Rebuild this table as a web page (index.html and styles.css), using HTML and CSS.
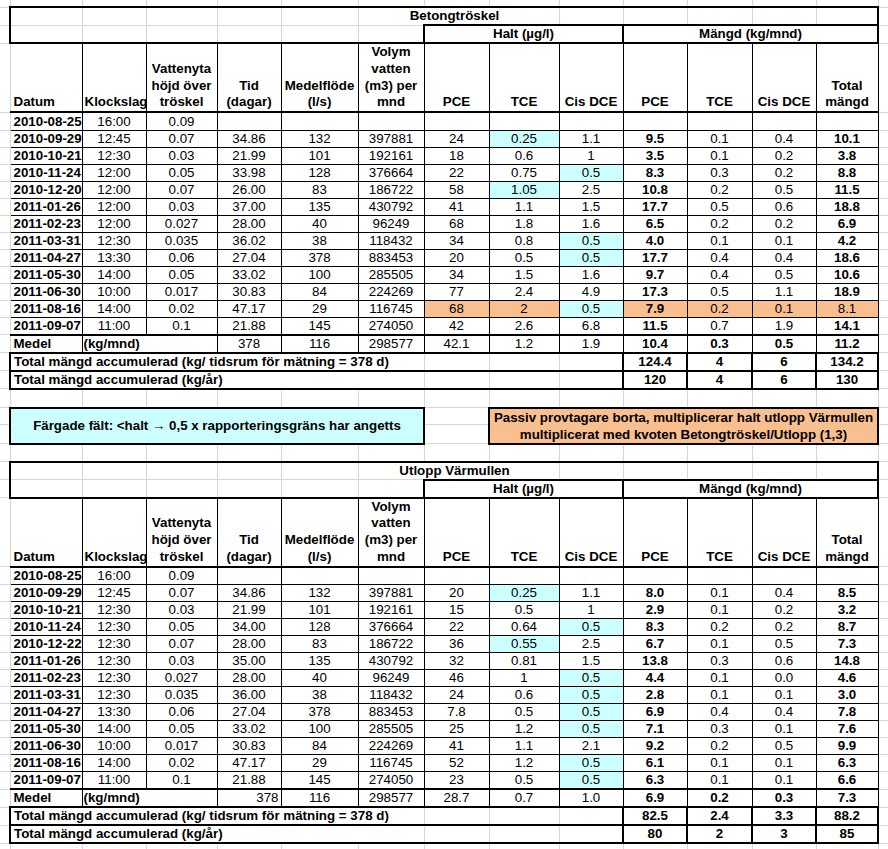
FILE: index.html
```html
<!DOCTYPE html>
<html lang="sv">
<head>
<meta charset="utf-8">
<title>Betongtröskel / Utlopp Värmullen</title>
<link rel="stylesheet" href="styles.css">
</head>
<body>
<table class="sheet">
<colgroup><col><col><col><col><col><col><col><col><col><col><col><col><col><col><col></colgroup>
<tbody>
<tr class="r0"><td></td><td></td><td></td><td></td><td></td><td></td><td></td><td></td><td></td><td></td><td></td><td></td><td></td><td></td><td></td></tr>

<tr class="ti"><td></td><td class="Tk Lk"></td><td class="Tk"></td><td class="Tk"></td><td class="Tk"></td><td class="Tk"></td><td colspan="3" class="Tk ttl">Betongtröskel</td><td class="Tk"></td><td class="Tk"></td><td class="Tk"></td><td class="Tk"></td><td class="Tk Rk"></td><td></td></tr>
<tr class="ha"><td></td><td class="Lk"></td><td></td><td></td><td></td><td></td><td></td><td colspan="3" class="box">Halt (µg/l)</td><td colspan="4" class="box">Mängd (kg/mnd)</td><td></td></tr>
<tr class="h"><td></td><td class="l">Datum</td><td>Klockslag</td><td>Vattenyta<br>höjd över<br>tröskel</td><td>Tid<br>(dagar)</td><td>Medelflöde<br>(l/s)</td><td>Volym<br>vatten<br>(m3) per<br>mnd</td><td>PCE</td><td>TCE</td><td>Cis DCE</td><td>PCE</td><td>TCE</td><td>Cis DCE</td><td>Total<br>mängd</td><td></td></tr>
<tr class="d first"><td></td><td>2010-08-25</td><td>16:00</td><td>0.09</td><td></td><td></td><td></td><td></td><td></td><td></td><td></td><td></td><td></td><td></td><td></td></tr>
<tr class="d"><td></td><td>2010-09-29</td><td>12:45</td><td>0.07</td><td>34.86</td><td>132</td><td>397881</td><td>24</td><td class="cy">0.25</td><td>1.1</td><td>9.5</td><td>0.1</td><td>0.4</td><td>10.1</td><td></td></tr>
<tr class="d"><td></td><td>2010-10-21</td><td>12:30</td><td>0.03</td><td>21.99</td><td>101</td><td>192161</td><td>18</td><td>0.6</td><td>1</td><td>3.5</td><td>0.1</td><td>0.2</td><td>3.8</td><td></td></tr>
<tr class="d"><td></td><td>2010-11-24</td><td>12:00</td><td>0.05</td><td>33.98</td><td>128</td><td>376664</td><td>22</td><td>0.75</td><td class="cy">0.5</td><td>8.3</td><td>0.3</td><td>0.2</td><td>8.8</td><td></td></tr>
<tr class="d"><td></td><td>2010-12-20</td><td>12:00</td><td>0.07</td><td>26.00</td><td>83</td><td>186722</td><td>58</td><td class="cy">1.05</td><td>2.5</td><td>10.8</td><td>0.2</td><td>0.5</td><td>11.5</td><td></td></tr>
<tr class="d"><td></td><td>2011-01-26</td><td>12:00</td><td>0.03</td><td>37.00</td><td>135</td><td>430792</td><td>41</td><td>1.1</td><td>1.5</td><td>17.7</td><td>0.5</td><td>0.6</td><td>18.8</td><td></td></tr>
<tr class="d"><td></td><td>2011-02-23</td><td>12:00</td><td>0.027</td><td>28.00</td><td>40</td><td>96249</td><td>68</td><td>1.8</td><td>1.6</td><td>6.5</td><td>0.2</td><td>0.2</td><td>6.9</td><td></td></tr>
<tr class="d"><td></td><td>2011-03-31</td><td>12:30</td><td>0.035</td><td>36.02</td><td>38</td><td>118432</td><td>34</td><td>0.8</td><td class="cy">0.5</td><td>4.0</td><td>0.1</td><td>0.1</td><td>4.2</td><td></td></tr>
<tr class="d"><td></td><td>2011-04-27</td><td>13:30</td><td>0.06</td><td>27.04</td><td>378</td><td>883453</td><td>20</td><td>0.5</td><td class="cy">0.5</td><td>17.7</td><td>0.4</td><td>0.4</td><td>18.6</td><td></td></tr>
<tr class="d"><td></td><td>2011-05-30</td><td>14:00</td><td>0.05</td><td>33.02</td><td>100</td><td>285505</td><td>34</td><td>1.5</td><td>1.6</td><td>9.7</td><td>0.4</td><td>0.5</td><td>10.6</td><td></td></tr>
<tr class="d"><td></td><td>2011-06-30</td><td>10:00</td><td>0.017</td><td>30.83</td><td>84</td><td>224269</td><td>77</td><td>2.4</td><td>4.9</td><td>17.3</td><td>0.5</td><td>1.1</td><td>18.9</td><td></td></tr>
<tr class="d"><td></td><td>2011-08-16</td><td>14:00</td><td>0.02</td><td>47.17</td><td>29</td><td>116745</td><td class="or">68</td><td class="or">2</td><td class="cy">0.5</td><td class="or">7.9</td><td class="or">0.2</td><td class="or">0.1</td><td class="or nb">8.1</td><td></td></tr>
<tr class="d"><td></td><td>2011-09-07</td><td>11:00</td><td>0.1</td><td>21.88</td><td>145</td><td>274050</td><td>42</td><td>2.6</td><td>6.8</td><td>11.5</td><td>0.7</td><td>1.9</td><td>14.1</td><td></td></tr>
<tr class="m"><td></td><td class="Lk nr l b">Medel</td><td colspan="2" class="nl nr l b pk">(kg/mnd)</td><td class="nl Rk">378</td><td class="Lk Rk">116</td><td class="Rk">298577</td><td class="Lk">42.1</td><td>1.2</td><td>1.9</td><td class="Lk b">10.4</td><td class="b">0.3</td><td class="b">0.5</td><td class="Rk b">11.2</td><td></td></tr>
<tr class="t"><td></td><td colspan="6" class="tx">Total mängd accumulerad (kg/ tidsrum för mätning = 378 d)</td><td class="gt"></td><td class="gt"></td><td class="gt"></td><td class="v">124.4</td><td class="v">4</td><td class="v">6</td><td class="v">134.2</td><td></td></tr>
<tr class="t t2"><td></td><td colspan="6" class="tx">Total mängd accumulerad (kg/år)</td><td class="gt"></td><td class="gt"></td><td class="gt"></td><td class="v">120</td><td class="v">4</td><td class="v">6</td><td class="v">130</td><td></td></tr>

<tr class="gap1"><td></td><td></td><td></td><td></td><td></td><td></td><td></td><td></td><td></td><td></td><td></td><td></td><td></td><td></td><td></td></tr>
<tr class="lg1"><td></td><td colspan="6" rowspan="2" class="note cyan">Färgade fält: &lt;halt → 0,5 x rapporteringsgräns har angetts</td><td></td><td colspan="6" rowspan="2" class="note orange">Passiv provtagare borta, multiplicerar halt utlopp Värmullen<br>multiplicerat med kvoten Betongtröskel/Utlopp (1,3)</td><td></td></tr>
<tr class="lg2"><td></td><td></td><td></td></tr>
<tr class="gap2"><td></td><td></td><td></td><td></td><td></td><td></td><td></td><td></td><td></td><td></td><td></td><td></td><td></td><td></td><td></td></tr>

<tr class="ti"><td></td><td class="Tk Lk"></td><td class="Tk"></td><td class="Tk"></td><td class="Tk"></td><td class="Tk"></td><td colspan="3" class="Tk ttl">Utlopp Värmullen</td><td class="Tk"></td><td class="Tk"></td><td class="Tk"></td><td class="Tk"></td><td class="Tk Rk"></td><td></td></tr>
<tr class="ha"><td></td><td class="Lk"></td><td></td><td></td><td></td><td></td><td></td><td colspan="3" class="box">Halt (µg/l)</td><td colspan="4" class="box">Mängd (kg/mnd)</td><td></td></tr>
<tr class="h"><td></td><td class="l">Datum</td><td>Klockslag</td><td>Vattenyta<br>höjd över<br>tröskel</td><td>Tid<br>(dagar)</td><td>Medelflöde<br>(l/s)</td><td>Volym<br>vatten<br>(m3) per<br>mnd</td><td>PCE</td><td>TCE</td><td>Cis DCE</td><td>PCE</td><td>TCE</td><td>Cis DCE</td><td>Total<br>mängd</td><td></td></tr>
<tr class="d first"><td></td><td>2010-08-25</td><td>16:00</td><td>0.09</td><td></td><td></td><td></td><td></td><td></td><td></td><td></td><td></td><td></td><td></td><td></td></tr>
<tr class="d"><td></td><td>2010-09-29</td><td>12:45</td><td>0.07</td><td>34.86</td><td>132</td><td>397881</td><td>20</td><td class="cy">0.25</td><td>1.1</td><td>8.0</td><td>0.1</td><td>0.4</td><td>8.5</td><td></td></tr>
<tr class="d"><td></td><td>2010-10-21</td><td>12:30</td><td>0.03</td><td>21.99</td><td>101</td><td>192161</td><td>15</td><td>0.5</td><td>1</td><td>2.9</td><td>0.1</td><td>0.2</td><td>3.2</td><td></td></tr>
<tr class="d"><td></td><td>2010-11-24</td><td>12:30</td><td>0.05</td><td>34.00</td><td>128</td><td>376664</td><td>22</td><td>0.64</td><td class="cy">0.5</td><td>8.3</td><td>0.2</td><td>0.2</td><td>8.7</td><td></td></tr>
<tr class="d"><td></td><td>2010-12-22</td><td>12:30</td><td>0.07</td><td>28.00</td><td>83</td><td>186722</td><td>36</td><td class="cy">0.55</td><td>2.5</td><td>6.7</td><td>0.1</td><td>0.5</td><td>7.3</td><td></td></tr>
<tr class="d"><td></td><td>2011-01-26</td><td>12:30</td><td>0.03</td><td>35.00</td><td>135</td><td>430792</td><td>32</td><td>0.81</td><td>1.5</td><td>13.8</td><td>0.3</td><td>0.6</td><td>14.8</td><td></td></tr>
<tr class="d"><td></td><td>2011-02-23</td><td>12:30</td><td>0.027</td><td>28.00</td><td>40</td><td>96249</td><td>46</td><td>1</td><td class="cy">0.5</td><td>4.4</td><td>0.1</td><td>0.0</td><td>4.6</td><td></td></tr>
<tr class="d"><td></td><td>2011-03-31</td><td>12:30</td><td>0.035</td><td>36.00</td><td>38</td><td>118432</td><td>24</td><td>0.6</td><td class="cy">0.5</td><td>2.8</td><td>0.1</td><td>0.1</td><td>3.0</td><td></td></tr>
<tr class="d"><td></td><td>2011-04-27</td><td>13:30</td><td>0.06</td><td>27.04</td><td>378</td><td>883453</td><td>7.8</td><td>0.5</td><td class="cy">0.5</td><td>6.9</td><td>0.4</td><td>0.4</td><td>7.8</td><td></td></tr>
<tr class="d"><td></td><td>2011-05-30</td><td>14:00</td><td>0.05</td><td>33.02</td><td>100</td><td>285505</td><td>25</td><td>1.2</td><td class="cy">0.5</td><td>7.1</td><td>0.3</td><td>0.1</td><td>7.6</td><td></td></tr>
<tr class="d"><td></td><td>2011-06-30</td><td>10:00</td><td>0.017</td><td>30.83</td><td>84</td><td>224269</td><td>41</td><td>1.1</td><td>2.1</td><td>9.2</td><td>0.2</td><td>0.5</td><td>9.9</td><td></td></tr>
<tr class="d"><td></td><td>2011-08-16</td><td>14:00</td><td>0.02</td><td>47.17</td><td>29</td><td>116745</td><td>52</td><td>1.2</td><td class="cy">0.5</td><td>6.1</td><td>0.1</td><td>0.1</td><td>6.3</td><td></td></tr>
<tr class="d"><td></td><td>2011-09-07</td><td>11:00</td><td>0.1</td><td>21.88</td><td>145</td><td>274050</td><td>23</td><td>0.5</td><td class="cy">0.5</td><td>6.3</td><td>0.1</td><td>0.1</td><td>6.6</td><td></td></tr>
<tr class="m"><td></td><td class="Lk nr l b">Medel</td><td colspan="2" class="nl nr l b pk">(kg/mnd)</td><td class="nl Rk r">378</td><td class="Lk Rk">116</td><td class="Rk">298577</td><td class="Lk">28.7</td><td>0.7</td><td>1.0</td><td class="Lk b">6.9</td><td class="b">0.2</td><td class="b">0.3</td><td class="Rk b">7.3</td><td></td></tr>
<tr class="t"><td></td><td colspan="6" class="tx">Total mängd accumulerad (kg/ tidsrum för mätning = 378 d)</td><td class="gt"></td><td class="gt"></td><td class="gt"></td><td class="v">82.5</td><td class="v">2.4</td><td class="v">3.3</td><td class="v">88.2</td><td></td></tr>
<tr class="t t2"><td></td><td colspan="6" class="tx">Total mängd accumulerad (kg/år)</td><td class="gt"></td><td class="gt"></td><td class="gt"></td><td class="v">80</td><td class="v">2</td><td class="v">3</td><td class="v">85</td><td></td></tr>
<tr class="end"><td></td><td></td><td></td><td></td><td></td><td></td><td></td><td></td><td></td><td></td><td></td><td></td><td></td><td></td><td></td></tr>
</tbody>
</table>
</body>
</html>
```

FILE: styles.css
```css
html, body {
  margin: 0;
  padding: 0;
  background: #ffffff;
  overflow: hidden;
}

.sheet {
  width: 888px;
  table-layout: fixed;
  border-collapse: collapse;
  font-family: "Liberation Sans", Arial, sans-serif;
  font-size: 10pt;
  color: #000;
}

.sheet col:nth-child(1) { width: 10px; }
.sheet col:nth-child(2) { width: 72px; }
.sheet col:nth-child(3) { width: 64px; }
.sheet col:nth-child(4) { width: 71px; }
.sheet col:nth-child(5) { width: 64px; }
.sheet col:nth-child(6) { width: 77px; }
.sheet col:nth-child(7) { width: 66px; }
.sheet col:nth-child(8) { width: 65px; }
.sheet col:nth-child(9) { width: 70px; }
.sheet col:nth-child(10) { width: 64px; }
.sheet col:nth-child(11) { width: 64px; }
.sheet col:nth-child(12) { width: 65px; }
.sheet col:nth-child(13) { width: 64px; }
.sheet col:nth-child(14) { width: 62px; }
.sheet col:nth-child(15) { width: 10px; }

.sheet td {
  border: 1px solid #d6d6d6;
  padding: 0 2px 1px;
  line-height: 15px;
  text-align: center;
  vertical-align: bottom;
  white-space: nowrap;
  overflow: visible;
}

.sheet tr td:first-child { border-left: none; }
.sheet tr td:last-child { border-right: none; }

/* row heights */
.r0 { height: 7px; }
.sheet .r0 td { border-top: none; }
.ti { height: 18px; }
.ha { height: 18px; }
.h { height: 69px; }
.d { height: 17px; }
.d.first { height: 18px; }
.m { height: 18px; }
.t { height: 17px; }
.t.t2 { height: 18px; }
.gap1 { height: 19px; }
.lg1 { height: 17px; }
.lg2 { height: 18px; }
.gap2 { height: 18px; }
.end { height: 9px; }
.sheet .end td { border-bottom: none; }

/* generic helpers */
.sheet td.Tk { border-top: 2px solid #000; }
.sheet td.Lk { border-left: 2px solid #000; }
.sheet td.Rk { border-right: 2px solid #000; }
.sheet td.nl { border-left: none; }
.sheet td.nr { border-right: none; }
.sheet td.l { text-align: left; padding-left: 3px; }
.sheet td.r { text-align: right; }
.sheet td.b { font-weight: bold; }
.sheet td.nb { font-weight: normal; }
.sheet td.pk { padding-left: 1px; }

/* title row */
.sheet td.ttl {
  font-weight: bold;
  padding-right: 10px;
}

/* Halt / Mängd group headers */
.sheet td.box {
  border: 2px solid #000;
  font-weight: bold;
}

/* column header row */
.sheet .h td {
  font-weight: bold;
  line-height: 16.7px;
  padding-bottom: 0;
}
.sheet .h td:nth-child(n+2):nth-last-child(n+2) {
  border: 1px solid #000;
  border-top: 2px solid #000;
  border-bottom: 2px solid #000;
}
.sheet .h td:nth-child(2) { border-left: 2px solid #000; text-align: left; padding-left: 3px; }
.sheet .h td:nth-child(8),
.sheet .h td:nth-child(11) { border-left: 2px solid #000; }
.sheet .h td:nth-child(14) { border-right: 2px solid #000; }

/* data rows */
.sheet .d td:nth-child(n+2):nth-last-child(n+2) { border: 1px solid #000; }
.sheet .d td:nth-child(2) {
  border-left: 2px solid #000;
  font-weight: bold;
  text-align: left;
  padding-left: 3px;
}
.sheet .d td:nth-child(8),
.sheet .d td:nth-child(11) { border-left: 2px solid #000; }
.sheet .d td:nth-child(11),
.sheet .d td:nth-child(14) { font-weight: bold; }
.sheet .d td:nth-child(14) { border-right: 2px solid #000; }
.sheet .d td.nb { font-weight: normal; }

.sheet td.cy { background: #ccffff; }
.sheet td.or { background: #fabf8f; }

/* medel row */
.sheet .m td:nth-child(n+2):nth-last-child(n+2) {
  border-top: 2px solid #000;
  border-bottom: 2px solid #000;
  border-left: 1px solid #000;
  border-right: 1px solid #000;
}
.sheet .m td.Lk { border-left: 2px solid #000; }
.sheet .m td.Rk { border-right: 2px solid #000; }
.sheet .m td.nl { border-left: none; }
.sheet .m td.nr { border-right: none; }

/* total rows */
.sheet td.tx {
  border-top: 2px solid #000;
  border-bottom: 2px solid #000;
  border-left: 2px solid #000;
  font-weight: bold;
  text-align: left;
  padding-left: 3px;
}
.sheet td.gt {
  border-top: 2px solid #000;
  border-bottom: 2px solid #000;
}
.sheet td.v {
  border: 2px solid #000;
  font-weight: bold;
}

/* notes */
.sheet td.note {
  border: 2px solid #000;
  font-weight: bold;
  vertical-align: middle;
  line-height: 17px;
  padding: 0 2px;
}
.sheet td.cyan { background: #ccffff; }
.sheet td.orange { background: #fabf8f; }
```
